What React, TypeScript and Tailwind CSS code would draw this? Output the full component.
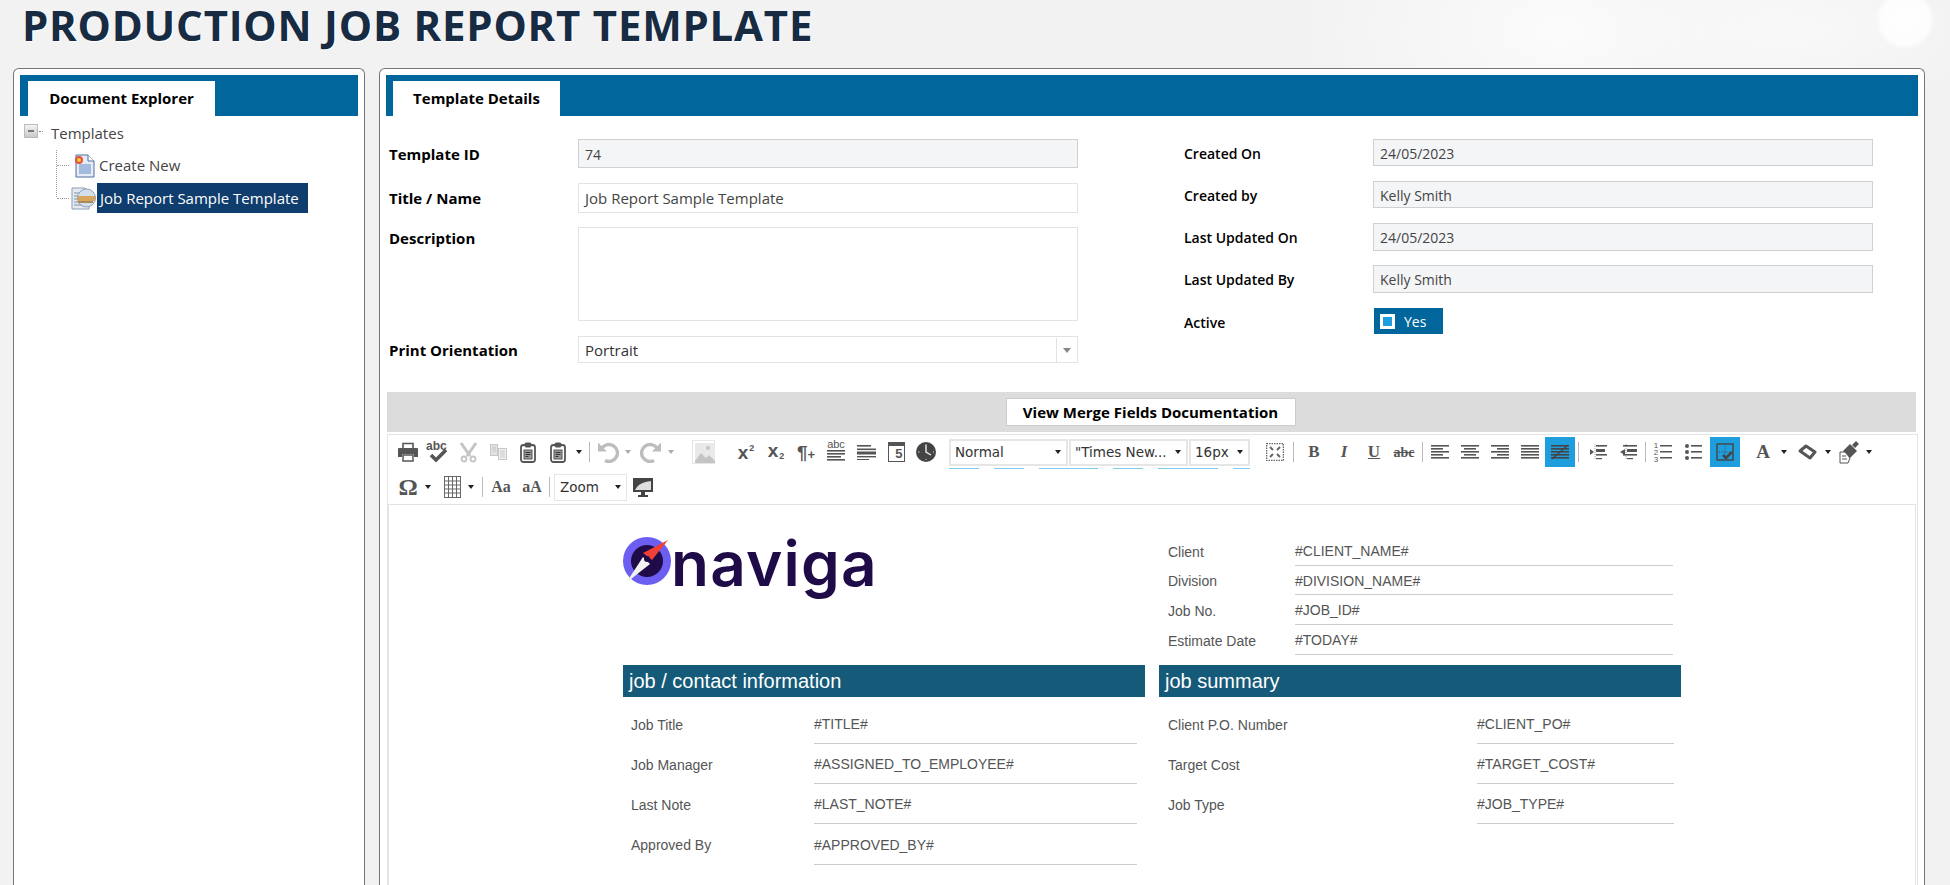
import type { ReactNode } from "react";

const open = "font-['Open_Sans',sans-serif]";
const arial = "font-['Liberation_Sans',Arial,sans-serif]";
const serif = "font-['Liberation_Serif',serif]";

function Tool({ children, active, width = "w-[30px]", className = "" }: { children: ReactNode; active?: boolean; width?: string; className?: string }) {
  return (
    <div className={`flex h-[30px] shrink-0 items-center justify-center text-[#555] ${width} ${active ? "bg-[#1f9ede]" : ""} ${className}`}>
      {children}
    </div>
  );
}

function Caret({ className = "w-[12px]", light }: { className?: string; light?: boolean }) {
  return (
    <div className={`flex h-[30px] shrink-0 items-center justify-center ${className}`}>
      <div className={`h-0 w-0 border-x-[3.5px] border-t-[4px] border-x-transparent ${light ? "border-t-[#aaa]" : "border-t-[#222]"}`} />
    </div>
  );
}

function Sep({ className = "w-[6px]" }: { className?: string }) {
  return (
    <div className={`flex h-[30px] shrink-0 items-center justify-center ${className}`}>
      <div className="h-[20px] w-[1px] bg-[#bbb]" />
    </div>
  );
}

function Lines({ rows }: { rows: [number, number][] }) {
  // alignment glyphs, each row is x + width in a 18 wide box
  return (
    <svg width="18" height="16" viewBox="0 0 18 16" fill="#555">
      {rows.map(([x, w], i) => (
        <rect key={i} x={x} y={1 + i * 3} width={w} height="1.6" />
      ))}
    </svg>
  );
}

function Select({ label, className }: { label: string; className: string }) {
  return (
    <div className={`flex h-[27px] shrink-0 items-center justify-between border-2 border-[#e6e6e6] pl-[4px] pr-[5px] font-['DejaVu_Sans',sans-serif] text-[13.5px] text-[#333] ${className}`}>
      <span>{label}</span>
      <div className="h-0 w-0 border-x-[3.5px] border-t-[4px] border-x-transparent border-t-[#222]" />
    </div>
  );
}

function PasteIcon() {
  return (
    <svg width="16" height="21" viewBox="0 0 16 21" fill="none" stroke="#555">
      <rect x="1" y="3" width="14" height="17" rx="2.5" strokeWidth="1.8" />
      <rect x="5" y="1" width="6" height="4" rx="1" fill="#555" />
      <rect x="4" y="8" width="8" height="9" fill="#999" stroke="#555" />
      <path d="M5.5 10.5h5M5.5 12.5h5M5.5 14.5h3" stroke="#333" />
    </svg>
  );
}

function ToolbarRowOne() {
  return (
    <div className="flex h-[30px] items-center">
      <Tool>
        <svg width="20" height="20" viewBox="0 0 20 20">
          <path d="M5 6V1.5h10V6" fill="none" stroke="#555" strokeWidth="1.6" />
          <path d="M1 6h18a1 1 0 0 1 1 1v8h-4v-3H4v3H0V7a1 1 0 0 1 1-1z" fill="#555" />
          <rect x="5" y="13" width="10" height="6" fill="none" stroke="#555" strokeWidth="1.5" />
        </svg>
      </Tool>
      <Tool>
        <div className="relative h-[24px] w-[24px]">
          <span className={`absolute left-[0px] top-[-3px] ${arial} text-[12px] font-bold text-[#555]`}>abc</span>
          <svg className="absolute left-[2px] top-[9px]" width="22" height="14" viewBox="0 0 22 14" fill="none" stroke="#555" strokeWidth="3.6">
            <path d="M3 6l5 5 10-10" />
          </svg>
        </div>
      </Tool>
      <Tool>
        <svg width="19" height="21" viewBox="0 0 19 21" fill="none" stroke="#c4c4c4">
          <path d="M2 1l9 13M17 1L8 14" strokeWidth="3" />
          <circle cx="5" cy="17" r="2.5" strokeWidth="1.8" />
          <circle cx="14" cy="17" r="2.5" strokeWidth="1.8" />
        </svg>
      </Tool>
      <Tool>
        <svg width="17" height="16" viewBox="0 0 17 16" fill="none" stroke="#c8c8c8">
          <rect x="0.5" y="0.5" width="7" height="11" fill="#e2e2e2" />
          <path d="M2 3h4M2 5h4M2 7h4" />
          <rect x="8.5" y="4.5" width="8" height="11" fill="#f0f0f0" />
          <path d="M10 7h5M10 9h5M10 11h5M10 13h5" />
        </svg>
      </Tool>
      <Tool><PasteIcon /></Tool>
      <Tool><PasteIcon /></Tool>
      <Caret />
      <Sep className="w-[9px]" />
      <Tool width="w-[28px]">
        <svg width="23" height="22" viewBox="0 0 23 22" fill="none" stroke="#bdbdbd" strokeWidth="3.4">
          <path d="M5 7a8.5 8.5 0 1 1 3 12.5" />
          <path d="M1 1.5v9h9z" fill="#bdbdbd" stroke="none" />
        </svg>
      </Tool>
      <Caret light />
      <Tool width="w-[28px]" className="ml-[2px]">
        <svg width="23" height="22" viewBox="0 0 23 22" fill="none" stroke="#bdbdbd" strokeWidth="3.4">
          <path d="M18 7a8.5 8.5 0 1 0-3 12.5" />
          <path d="M22 1.5v9h-9z" fill="#bdbdbd" stroke="none" />
        </svg>
      </Tool>
      <Caret light className="w-[14px]" />
      <Tool className="ml-[10px]">
        <svg width="23" height="24" viewBox="0 0 23 24">
          <rect x="0.5" y="0.5" width="22" height="23" fill="none" stroke="#ccc" strokeDasharray="1 1" />
          <rect x="3" y="3" width="20" height="20" fill="#e9e9e9" />
          <path d="M3 21l6-8 5 5 3-3 6 6v2H3z" fill="#c4c4c4" />
          <circle cx="16" cy="8" r="2" fill="#c4c4c4" />
        </svg>
      </Tool>
      <Tool className={`ml-[13px] ${arial} font-bold`}>
        <span className="text-[19px] leading-none">x</span>
        <span className="mb-[8px] ml-[1px] text-[9px] leading-none">2</span>
      </Tool>
      <Tool className={`${arial} font-bold`}>
        <span className="mb-[3px] text-[19px] leading-none">x</span>
        <span className="mt-[8px] ml-[1px] text-[9px] leading-none">2</span>
      </Tool>
      <Tool className={`${arial} font-bold`}>
        <span className="text-[19px] leading-none">¶</span>
        <span className="mt-[4px] text-[13px] leading-none">+</span>
      </Tool>
      <Tool>
        <div className="flex flex-col items-center">
          <span className={`${arial} text-[11px] leading-[9px]`}>abc</span>
          <Lines rows={[[0, 18], [0, 18], [0, 14], [0, 18]]} />
        </div>
      </Tool>
      <Tool>
        <svg width="19" height="16" viewBox="0 0 19 16" fill="#555">
          <rect y="1" width="14" height="1.6" />
          <rect y="4.5" width="19" height="1.6" />
          <rect y="7.5" width="19" height="3" />
          <rect y="12" width="19" height="1.4" />
          <rect y="15" width="12" height="1" />
        </svg>
      </Tool>
      <Tool>
        <div className={`flex h-[20px] w-[17px] items-center justify-end border border-t-[4px] border-[#555] pr-[1px] ${arial} text-[13px] font-bold leading-none`}>5</div>
      </Tool>
      <Tool>
        <svg width="20" height="20" viewBox="0 0 20 20">
          <circle cx="10" cy="10" r="10" fill="#444" />
          <path d="M10 2.5V10l5 3" fill="none" stroke="#eee" strokeWidth="1.4" />
          <path d="M2 10h1.5M17 10h1M10 17v1" stroke="#ddd" />
        </svg>
      </Tool>
      <div className="relative ml-[8px] flex shrink-0 gap-[1px]">
        <Select label="Normal" className="w-[119px]" />
        <Select label={'"Times New...'} className="w-[119px]" />
        <Select label="16px" className="w-[61px]" />
        <div className="absolute left-0 top-[29px] flex h-[1px] gap-[15px]">
          <div className="w-[30px] bg-[#7fcdf2]" />
          <div className="w-[30px] bg-[#7fcdf2]" />
          <div className="w-[59px] bg-[#7fcdf2]" />
          <div className="w-[30px] bg-[#7fcdf2]" />
          <div className="w-[60px] bg-[#7fcdf2]" />
          <div className="w-[17px] bg-[#7fcdf2]" />
        </div>
      </div>
      <Tool className="ml-[10px]">
        <svg width="18" height="18" viewBox="0 0 18 18" fill="none" stroke="#666">
          <rect x="0.5" y="0.5" width="17" height="17" strokeDasharray="1.5 1" strokeWidth="1.6" />
          <path d="M4 4l3 3M14 4l-3 3M4 14l3-3M14 14l-3-3" strokeWidth="2" />
        </svg>
      </Tool>
      <Sep />
      <Tool className={`ml-[3px] ${serif}`}><span className="text-[17px] font-bold">B</span></Tool>
      <Tool className={serif}><span className="text-[17px] font-bold italic">I</span></Tool>
      <Tool className={serif}><span className="text-[17px] font-bold underline">U</span></Tool>
      <Tool className={serif}><span className="text-[14px] font-bold line-through">abc</span></Tool>
      <Sep />
      <Tool><Lines rows={[[0, 18], [0, 12], [0, 18], [0, 12], [0, 18]]} /></Tool>
      <Tool><Lines rows={[[0, 18], [3, 12], [0, 18], [3, 12], [0, 18]]} /></Tool>
      <Tool><Lines rows={[[0, 18], [6, 12], [0, 18], [6, 12], [0, 18]]} /></Tool>
      <Tool><Lines rows={[[0, 18], [0, 18], [0, 18], [0, 18], [0, 18]]} /></Tool>
      <Tool active>
        <svg width="18" height="16" viewBox="0 0 18 16" fill="#444">
          {[1, 4, 7, 10, 13].map((y) => (
            <rect key={y} x="0" y={y} width="18" height="1.6" />
          ))}
          <path d="M1 15L17 1" stroke="#444" strokeWidth="1.6" />
        </svg>
      </Tool>
      <Sep />
      <Tool className="ml-[2px]">
        <svg width="17" height="18" viewBox="0 0 17 18" fill="#555">
          <path d="M5 1v16" stroke="#999" strokeDasharray="1 1" />
          <path d="M0 6l4 3-4 3z" />
          <rect x="6" y="2" width="11" height="1.6" /><rect x="6" y="6" width="9" height="3" /><rect x="6" y="11" width="11" height="1.6" /><rect x="6" y="15" width="6" height="1.2" />
        </svg>
      </Tool>
      <Tool>
        <svg width="17" height="18" viewBox="0 0 17 18" fill="#555">
          <path d="M6 1v16" stroke="#999" strokeDasharray="1 1" />
          <path d="M5 6L0 9l5 3z" />
          <rect x="3" y="2" width="14" height="1.6" /><rect x="7" y="6" width="10" height="3" /><rect x="3" y="11" width="14" height="1.6" /><rect x="7" y="15" width="6" height="1.2" />
        </svg>
      </Tool>
      <Sep className="w-[5px]" />
      <Tool>
        <div className="flex items-center gap-[2px]">
          <div className={`flex flex-col ${arial} text-[8px] leading-[7px]`}><span>1</span><span>2</span><span>3</span></div>
          <svg width="12" height="18" viewBox="0 0 12 18" fill="#555"><rect y="2" width="12" height="1.5" /><rect y="8" width="12" height="1.5" /><rect y="14" width="12" height="1.5" /></svg>
        </div>
      </Tool>
      <Tool>
        <svg width="17" height="18" viewBox="0 0 17 18" fill="#555">
          <circle cx="2" cy="3" r="2" /><circle cx="2" cy="9" r="2" /><circle cx="2" cy="15" r="2" />
          <rect x="6" y="2" width="11" height="1.6" /><rect x="6" y="8" width="11" height="1.6" /><rect x="6" y="14" width="11" height="1.6" />
        </svg>
      </Tool>
      <Tool active className="ml-[2px]">
        <svg width="18" height="18" viewBox="0 0 18 18" fill="none" stroke="#444">
          <rect x="1" y="1" width="16" height="16" strokeWidth="1.4" />
          <path d="M9 3v8M3 9h12" strokeDasharray="1 1.5" />
          <path d="M7 12l3 3 6-6" strokeWidth="2.6" />
        </svg>
      </Tool>
      <Tool className={`ml-[8px] ${serif}`}><span className="text-[19px] font-bold">A</span></Tool>
      <Caret />
      <Tool className="ml-[2px]">
        <svg width="19" height="16" viewBox="0 0 19 16" fill="none" stroke="#555">
          <path d="M2 7l6-5 9 6-5 6z" strokeWidth="3" strokeLinejoin="round" />
          <path d="M7 6l5 3" stroke="#fff" strokeWidth="1.5" />
        </svg>
      </Tool>
      <Caret className="w-[11px]" />
      <Tool className="ml-[1px]">
        <svg width="22" height="24" viewBox="0 0 22 24" fill="#555">
          <path d="M14 5l4-4 3 3-4 4z" />
          <path d="M5 11l7-7 7 7-7 7z" />
          <path d="M2 12h5l5 6-2 5H2z" fill="#fff" stroke="#555" />
          <path d="M4 16h4M4 19h5" stroke="#555" />
        </svg>
      </Tool>
      <Caret className="w-[10px]" />
    </div>
  );
}

function ToolbarRowTwo() {
  return (
    <div className="mt-[5px] flex h-[30px] items-center">
      <Tool className={serif}><span className="text-[24px] font-bold leading-none">Ω</span></Tool>
      <Caret className="w-[10px]" />
      <Tool className="ml-[4px]">
        <svg width="17" height="22" viewBox="0 0 17 22" fill="none" stroke="#666">
          <rect x="0.5" y="0.5" width="16" height="21" />
          <path d="M0 5h17M0 9h17M0 13h17M0 17h17M4.5 0v22M8.5 0v22M12.5 0v22" />
        </svg>
      </Tool>
      <Caret className="w-[8px]" />
      <Sep className="ml-[5px] w-[5px]" />
      <Tool width="w-[28px]" className={`ml-[2px] ${serif}`}><span className="text-[16px] font-bold">Aa</span></Tool>
      <Tool width="w-[28px]" className={`ml-[3px] ${serif}`}><span className="text-[16px] font-bold">aA</span></Tool>
      <Sep />
      <div className="ml-[2px] flex h-[27px] w-[73px] shrink-0 items-center justify-between border border-[#e6e6e6] pl-[5px] pr-[5px] font-['DejaVu_Sans',sans-serif] text-[13.5px] text-[#333]">
        <span>Zoom</span>
        <div className="h-0 w-0 border-x-[3.5px] border-t-[4px] border-x-transparent border-t-[#222]" />
      </div>
      <Tool className="ml-[1px]">
        <svg width="20" height="19" viewBox="0 0 20 19">
          <rect x="0" y="0" width="20" height="14" fill="#444" />
          <path d="M2 12c3-6 8-8 16-9v9z" fill="#ddd" />
          <rect x="8" y="14" width="4" height="3" fill="#444" />
          <rect x="5" y="17" width="10" height="2" fill="#444" />
        </svg>
      </Tool>
    </div>
  );
}

function TextField({ value, className = "text-[14px]", muted }: { value: string; className?: string; muted?: boolean }) {
  return (
    <div className={`flex w-[500px] shrink-0 items-center border px-[6px] pt-[1px] ${muted ? "border-[#d0d0d0] bg-[#f4f5f7] text-[#444]" : "border-[#e3e3e3] bg-white text-[#444]"} ${className}`}>
      {value}
    </div>
  );
}

function FormRow({ label, className, labelClass, children }: { label: string; className: string; labelClass: string; children: ReactNode }) {
  return (
    <div className={`flex ${className}`}>
      <div className={`w-[189px] shrink-0 text-black ${labelClass}`}>{label}</div>
      {children}
    </div>
  );
}

function DocRow({ label, value, labelWidth, valueWidth, height = "h-[40px]" }: { label: string; value: string; labelWidth: string; valueWidth: string; height?: string }) {
  return (
    <div className={`flex ${height} items-center ${arial} text-[14px] text-[#555]`}>
      <div className={`${labelWidth} shrink-0 pt-[2px]`}>{label}</div>
      <div className={`flex h-full ${valueWidth} shrink-0 items-center border-b border-[#ccc] pt-[2px]`}>{value}</div>
    </div>
  );
}

function MetaRow({ label, value, height }: { label: string; value: string; height: string }) {
  return (
    <div className={`flex ${height} items-center text-[14px] text-[#555]`}>
      <div className="w-[127px] shrink-0 pt-[2px]">{label}</div>
      <div className="flex h-full w-[378px] shrink-0 items-center border-b border-[#ccc] pt-[2px]">{value}</div>
    </div>
  );
}

function TreeIconNew() {
  return (
    <svg width="22" height="24" viewBox="0 0 22 24">
      <path d="M3 1h12l6 6v16H3z" fill="#e6ecf6" stroke="#4d6f9f" />
      <path d="M15 1v6h6" fill="#fff" stroke="#4d6f9f" />
      <rect x="6" y="10" width="12" height="10" fill="#a3bbdd" />
      <circle cx="6" cy="6" r="3" fill="#f6d33a" stroke="#e8503a" strokeWidth="2" />
    </svg>
  );
}

function TreeIconDoc() {
  return (
    <svg width="25" height="24" viewBox="0 0 25 24">
      <path d="M1 2h13l4 4v17H1z" fill="#e6eaf0" stroke="#8d9db5" />
      <path d="M3 7h7M3 10h7M3 13h7M3 16h7M3 19h10" stroke="#7f93ad" />
      <circle cx="15.5" cy="12" r="9" fill="#d4dfeb" stroke="#8da0b8" />
      <rect x="7" y="10" width="17" height="5" fill="#d9a55b" />
      <rect x="7" y="15" width="15" height="2" fill="#a88a60" />
    </svg>
  );
}

export default function App() {
  return (
    <div className={`h-[885px] w-[1950px] overflow-hidden bg-[#f2f2f2] bg-[radial-gradient(circle_at_1905px_20px,#fefefe_0px,#fdfdfd_24px,transparent_30px),radial-gradient(ellipse_at_1560px_30px,#fbfbfb_0px,transparent_260px),radial-gradient(ellipse_at_1800px_30px,#f9f9f9_0px,transparent_180px)] ${open}`}>
      <div className="h-[68px] pl-[22px]">
        <h1 className="text-[42px] font-bold leading-[50px] tracking-[0.75px] text-[#172b42] [text-shadow:1px_1px_0_#fff]">
          PRODUCTION JOB REPORT TEMPLATE
        </h1>
      </div>

      <div className="flex gap-[14px] pl-[13px]">
        {/* Document explorer */}
        <div className="h-[817px] w-[352px] shrink-0 rounded-t-md border border-b-0 border-[#777] bg-white p-[6px]">
          <div className="h-[41px] bg-[#01669b] pl-[8px] pt-[6px]">
            <div className="flex h-[35px] w-[187px] items-center justify-center bg-white text-[15px] font-bold text-black">
              Document Explorer
            </div>
          </div>
          <div className="text-[15px] text-[#444]">
            <div className="flex h-[30px] items-center pl-[4px]">
              <div className="flex h-[14px] w-[14px] items-center justify-center border border-[#bbb] bg-gradient-to-b from-[#f4f4f4] to-[#c9c9c9]">
                <div className="h-[2px] w-[6px] bg-[#777]" />
              </div>
              <div className="ml-[1px] w-[4px] border-t border-dotted border-[#888]" />
              <span className="ml-[8px] mt-[4px]">Templates</span>
            </div>
            <div className="ml-[36px] mt-[4px] h-[47px] border-l border-dotted border-[#999] pl-[12px]">
              <div className="flex h-[31px] items-center">
                <div className="relative -left-[12px] w-[12px] border-t border-dotted border-[#999]" />
                <div className="-ml-[8px] flex"><TreeIconNew /></div>
                <span className="ml-[4px]">Create New</span>
              </div>
              <div className="flex h-[34px] items-center">
                <div className="relative -left-[12px] w-[12px] border-t border-dotted border-[#999]" />
                <div className="-ml-[10px] flex"><TreeIconDoc /></div>
                <span className="ml-[1px] flex h-[30px] w-[211px] shrink-0 items-center bg-[#0f3d6e] pl-[3px] text-white">Job Report Sample Template</span>
              </div>
            </div>
          </div>
        </div>

        {/* Template details */}
        <div className="h-[817px] w-[1546px] shrink-0 rounded-t-md border border-b-0 border-[#777] bg-white p-[6px]">
          <div className="h-[41px] bg-[#01669b] pl-[7px] pt-[6px]">
            <div className="flex h-[35px] w-[167px] items-center justify-center bg-white text-[15px] font-bold text-black">
              Template Details
            </div>
          </div>

          <div className="flex pl-[3px]">
            <div className="w-[795px] shrink-0">
              <FormRow label="Template ID" labelClass="pt-[4px] text-[15px] font-bold" className="mt-[23px] h-[29px]">
                <TextField value="74" muted />
              </FormRow>
              <FormRow label="Title / Name" labelClass="pt-[4px] text-[15px] font-bold" className="mt-[15px] h-[30px]">
                <TextField value="Job Report Sample Template" className="text-[15px]" />
              </FormRow>
              <FormRow label="Description" labelClass="text-[15px] font-bold" className="mt-[14px] h-[94px]">
                <TextField value="" />
              </FormRow>
              <FormRow label="Print Orientation" labelClass="pt-[3px] text-[15px] font-bold" className="mt-[15px] h-[27px]">
                <div className="flex w-[500px] shrink-0 items-center justify-between border border-[#e3e3e3] pl-[6px] pt-[1px] text-[15px] text-[#333]">
                  <span>Portrait</span>
                  <div className="flex h-full w-[21px] items-center justify-center border-l border-[#e3e3e3]">
                    <div className="h-0 w-0 border-x-[4px] border-t-[5px] border-x-transparent border-t-[#888]" />
                  </div>
                </div>
              </FormRow>
            </div>
            <div className="w-[689px] shrink-0">
              <FormRow label="Created On" labelClass="pt-[4px] text-[14px] font-semibold" className="mt-[23px] h-[27px]"><TextField value="24/05/2023" muted /></FormRow>
              <FormRow label="Created by" labelClass="pt-[4px] text-[14px] font-semibold" className="mt-[15px] h-[27px]"><TextField value="Kelly Smith" muted /></FormRow>
              <FormRow label="Last Updated On" labelClass="pt-[4px] text-[14px] font-semibold" className="mt-[15px] h-[28px]"><TextField value="24/05/2023" muted /></FormRow>
              <FormRow label="Last Updated By" labelClass="pt-[4px] text-[14px] font-semibold" className="mt-[14px] h-[28px]"><TextField value="Kelly Smith" muted /></FormRow>
              <FormRow label="Active" labelClass="pt-[4px] text-[14px] font-semibold" className="mt-[15px] h-[26px]">
                <div className="ml-[1px] flex w-[69px] items-center bg-[#01669b] pl-[6px] pt-[1px] text-[14px] text-white">
                  <div className="flex h-[15px] w-[15px] items-center justify-center bg-white">
                    <div className="h-[9px] w-[9px] bg-[#1f9ede]" />
                  </div>
                  <span className="ml-[9px]">Yes</span>
                </div>
              </FormRow>
            </div>
          </div>

          <div className="ml-[1px] mt-[29px] flex h-[40px] w-[1529px] justify-center bg-[#dcdcdc] pr-[2px] pt-[6px]">
            <div className="flex h-[28px] w-[290px] items-center justify-center border border-[#ccc] bg-white text-[15px] font-bold text-black">
              View Merge Fields Documentation
            </div>
          </div>

          {/* Editor */}
          <div className="ml-[1px] mt-[2px] h-[500px] w-[1531px] border border-[#e5e5e5]">
            <div className="h-[69px] pl-[5px] pt-[2px]">
              <ToolbarRowOne />
              <ToolbarRowTwo />
            </div>
            <div className="h-[500px] w-[1528px] border border-[#e3e3e3] pl-[234px] pt-[31px]">
              <div className="flex">
                <div className="w-[545px] shrink-0 pt-[1px]">
                  <div className="flex h-[60px] items-start">
                    <svg width="50" height="48" viewBox="0 0 50 48" className="shrink-0">
                      <circle cx="24" cy="24" r="24" fill="#6d5ef2" />
                      <circle cx="24" cy="24" r="16" fill="#1f0b47" />
                      <path d="M45 3L20 16l9 7z" fill="#ee4036" />
                      <path d="M3 46l17-26 7 7z" fill="#f2f2f2" />
                      <circle cx="24" cy="22" r="3" fill="#1f0b47" />
                    </svg>
                    <span className="ml-[-2px] mt-[-8px] font-['Inter',sans-serif] text-[62px] font-semibold leading-[70px] tracking-[1.2px] text-[#1f0b47]">
                      naviga
                    </span>
                  </div>
                </div>
                <div className={arial}>
                  <MetaRow label="Client" value="#CLIENT_NAME#" height="h-[30px]" />
                  <MetaRow label="Division" value="#DIVISION_NAME#" height="h-[29px]" />
                  <MetaRow label="Job No." value="#JOB_ID#" height="h-[30px]" />
                  <MetaRow label="Estimate Date" value="#TODAY#" height="h-[30px]" />
                </div>
              </div>

              <div className="mt-[10px] flex gap-[14px]">
                <div className="w-[522px] shrink-0">
                  <div className={`flex h-[32px] items-center bg-[#155a78] pl-[6px] ${arial} text-[20px] text-white`}>job / contact information</div>
                  <div className="mt-[7px] pl-[8px]">
                    <DocRow label="Job Title" value="#TITLE#" labelWidth="w-[183px]" valueWidth="w-[323px]" />
                    <DocRow label="Job Manager" value="#ASSIGNED_TO_EMPLOYEE#" labelWidth="w-[183px]" valueWidth="w-[323px]" />
                    <DocRow label="Last Note" value="#LAST_NOTE#" labelWidth="w-[183px]" valueWidth="w-[323px]" />
                    <DocRow label="Approved By" value="#APPROVED_BY#" labelWidth="w-[183px]" valueWidth="w-[323px]" height="h-[41px]" />
                  </div>
                </div>
                <div className="w-[522px] shrink-0">
                  <div className={`flex h-[32px] items-center bg-[#155a78] pl-[6px] ${arial} text-[20px] text-white`}>job summary</div>
                  <div className="mt-[7px] pl-[9px]">
                    <DocRow label="Client P.O. Number" value="#CLIENT_PO#" labelWidth="w-[309px]" valueWidth="w-[197px]" />
                    <DocRow label="Target Cost" value="#TARGET_COST#" labelWidth="w-[309px]" valueWidth="w-[197px]" />
                    <DocRow label="Job Type" value="#JOB_TYPE#" labelWidth="w-[309px]" valueWidth="w-[197px]" />
                  </div>
                </div>
              </div>
            </div>
          </div>
        </div>
      </div>
    </div>
  );
}
